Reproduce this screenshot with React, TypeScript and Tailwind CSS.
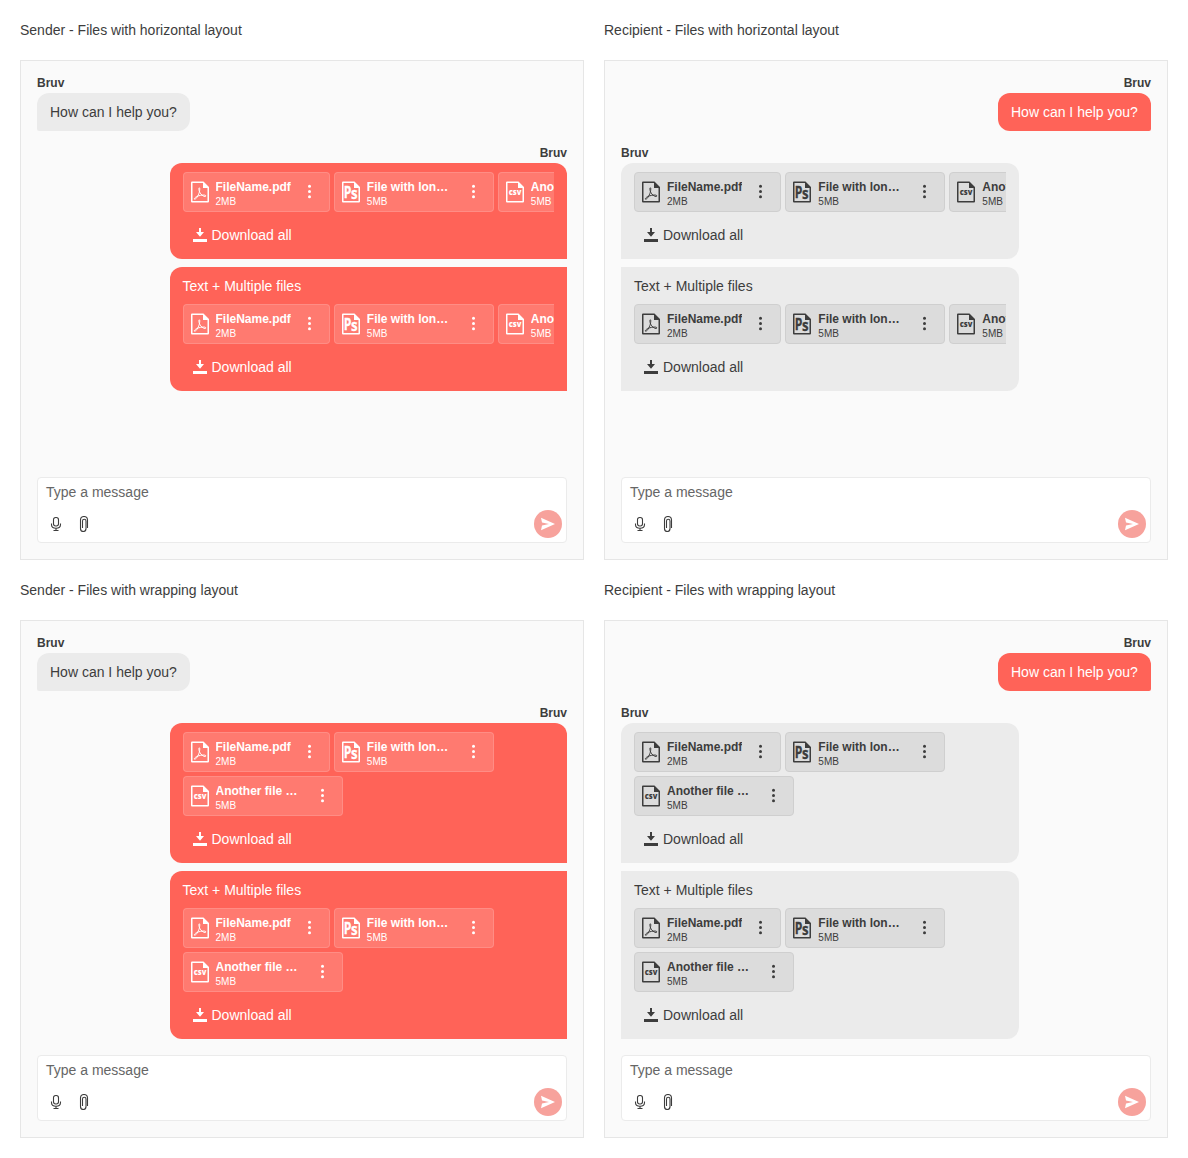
import React from "react";

type FileKind = "pdf" | "ps" | "csv";
type Side = "left" | "right";

const FILES: { kind: FileKind; name: string; size: string }[] = [
  { kind: "pdf", name: "FileName.pdf", size: "2MB" },
  { kind: "ps", name: "File with long name.psd", size: "5MB" },
  { kind: "csv", name: "Another file with long name.csv", size: "5MB" },
];

function FileIcon({ kind }: { kind: FileKind }) {
  return (
    <svg viewBox="0 0 24 24" className="size-6 shrink-0" fill="currentColor">
      <path
        fillRule="evenodd"
        d="M3 2.500a1 1 0 0 1 1-1h11.500l5.500 5.500v14.500a1 1 0 0 1-1 1H4a1 1 0 0 1-1-1zM4.500 3v18h15V8H15V3z"
      />
      {kind === "pdf" && (
        <path
          d="M11.400 7.800c-.8 0-.7 2 .3 4.400 1 2.300 3.600 4.300 5.300 4.300 1.200 0 1.200-1.200-.3-1.400-2.400-.3-6 .5-8 1.500-2.400 1.200-2.800 2.600-2 2.700 1.300 0 3.600-3.700 4.500-6.700.6-2.200.8-4.800.2-4.800z"
          fill="none"
          stroke="currentColor"
          strokeWidth="1"
        />
      )}
      {kind === "ps" && (
        <text fontFamily="Open Sans" fontWeight="700" fontSize="16" stroke="currentColor" strokeWidth=".3">
          <tspan x="4.800" y="18" textLength="7.600" lengthAdjust="spacingAndGlyphs">P</tspan>
          <tspan x="12" y="19.400" textLength="6.600" lengthAdjust="spacingAndGlyphs">s</tspan>
        </text>
      )}
      {kind === "csv" && (
        <text x="5.700" y="15" fontFamily="Open Sans" fontWeight="800" fontSize="7.800" textLength="12.700" lengthAdjust="spacingAndGlyphs">
          csv
        </text>
      )}
    </svg>
  );
}

function FileCard({ file, side }: { file: (typeof FILES)[number]; side: Side }) {
  const tone = side === "right" ? "bg-white/15 border-white/15" : "bg-[#dcdcdc] border-[#cfcfcf]";
  return (
    <div className={`flex h-10 max-w-[160px] shrink-0 items-center gap-1 rounded border px-1 ${tone}`}>
      <FileIcon kind={file.kind} />
      <div className="min-w-0 flex-1 pt-1">
        <div className="truncate text-[12px] leading-[15px] font-bold">{file.name}</div>
        <div className="text-[10px] leading-[13px]">{file.size}</div>
      </div>
      <div className="flex w-[30px] shrink-0 justify-center">
        <svg viewBox="0 0 16 16" className="size-4" fill="currentColor">
          <circle cx="7.500" cy="2.300" r="1.500" />
          <circle cx="7.500" cy="7.500" r="1.500" />
          <circle cx="7.500" cy="12.700" r="1.500" />
        </svg>
      </div>
    </div>
  );
}

function FilesBubble({ side, wrap, text, shape }: { side: Side; wrap: boolean; text?: string; shape: string }) {
  const tone = side === "right" ? "bg-[#ff6358] text-white self-end" : "bg-[#ebebeb] text-[#3d3d3d]";
  return (
    <div className={`flex w-3/4 flex-col gap-2 px-[13px] py-[9px] ${tone} ${shape}`}>
      {text && <div>{text}</div>}
      <div className={`flex gap-1 overflow-hidden ${wrap ? "flex-wrap" : ""}`}>
        {FILES.map((f) => (
          <FileCard key={f.kind} file={f} side={side} />
        ))}
      </div>
      <div className="flex h-[30px] items-center gap-1 px-[9px]">
        <svg viewBox="0 0 16 16" className="size-4" fill="currentColor">
          <path d="M7 1h2v4h3L8 9.700 4 5h3zM1 12h14v3H1z" />
        </svg>
        <span>Download all</span>
      </div>
    </div>
  );
}

function Composer() {
  return (
    <div className="rounded border border-[#ebebeb] bg-white">
      <div className="px-2 py-1 text-[#666666]">Type a message</div>
      <div className="flex items-center p-1 text-[#3d3d3d]">
        <div className="flex size-7 items-center justify-center">
          <svg viewBox="0 0 16 16" className="size-4" fill="none" stroke="currentColor" strokeWidth="1.100">
            <rect x="5.500" y="1.500" width="5" height="8.500" rx="2.200" />
            <path d="M3.500 7.500v1c0 2.500 2 3.800 4.500 3.800s4.500-1.300 4.500-3.800v-1M8 12.300v2.200M5.500 14.500h5" />
          </svg>
        </div>
        <div className="flex size-7 items-center justify-center">
          <svg viewBox="0 0 16 16" className="size-4" fill="none" stroke="currentColor" strokeWidth="1.100">
            <path d="M11.500 12V4a3.500 3.500 0 0 0-7 0v8.500a2.750 3 0 0 0 5.500 0V5a1.750 1.750 0 0 0-3.500 0v7" />
          </svg>
        </div>
        <div className="ml-auto flex size-7 items-center justify-center rounded-full bg-[#f7a29c] text-white">
          <svg viewBox="0 0 16 16" className="size-4" fill="currentColor">
            <path d="M1 1.700 15 8 1 14.300 2 9.500 9 8 2 6.500z" />
          </svg>
        </div>
      </div>
    </div>
  );
}

function Author({ side }: { side: Side }) {
  return (
    <div className={`h-4 text-[12px] leading-[12px] font-bold text-[#3d3d3d] ${side === "right" ? "text-right" : ""}`}>Bruv</div>
  );
}

function Chat({ title, side, wrap }: { title: string; side: Side; wrap: boolean }) {
  const sender = side === "right";
  const other: Side = sender ? "left" : "right";
  return (
    <section>
      <h2 className="mb-5">{title}</h2>
      <div className={`flex flex-col border border-[#e6e6e6] bg-[#fafafa] p-4 ${wrap ? "h-[518px]" : "h-[500px]"}`}>
        <Author side={other} />
        <div
          className={`w-[153px] px-[13px] py-[9px] whitespace-nowrap ${
            sender
              ? "rounded-xl rounded-bl-[2px] bg-[#ebebeb] text-[#3d3d3d]"
              : "self-end rounded-xl rounded-br-[2px] bg-[#ff6358] text-white"
          }`}
        >
          How can I help you?
        </div>
        <div className="mt-4 flex flex-col">
          <Author side={side} />
          <div className="flex flex-col gap-2">
            <FilesBubble side={side} wrap={wrap} shape={sender ? "rounded-xl rounded-br-none" : "rounded-xl rounded-bl-none"} />
            <FilesBubble side={side} wrap={wrap} text="Text + Multiple files" shape={sender ? "rounded-l-xl" : "rounded-r-xl"} />
          </div>
        </div>
        <div className="mt-auto">
          <Composer />
        </div>
      </div>
    </section>
  );
}

export default function App() {
  return (
    <main className="grid h-[1158px] grid-cols-2 content-start gap-5 bg-white p-5 font-['Liberation_Sans',Arial,sans-serif] text-[14px] leading-5 text-[#3d3d3d]">
      <Chat title="Sender - Files with horizontal layout" side="right" wrap={false} />
      <Chat title="Recipient - Files with horizontal layout" side="left" wrap={false} />
      <Chat title="Sender - Files with wrapping layout" side="right" wrap />
      <Chat title="Recipient - Files with wrapping layout" side="left" wrap />
    </main>
  );
}
